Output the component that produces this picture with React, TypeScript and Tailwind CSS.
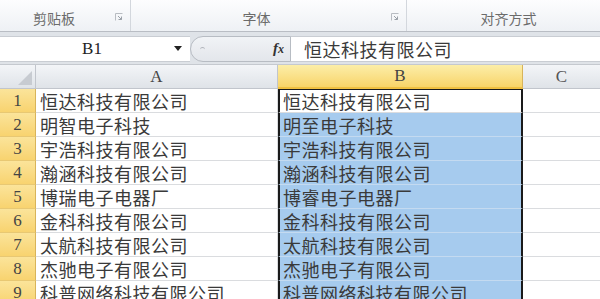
import React from "react";

const cjk = { fontFamily: '"Noto Sans CJK SC", "Noto Sans", sans-serif' };
const serif = { fontFamily: '"Liberation Serif", "Noto Sans CJK SC", serif' };

const colA = [
  "恒达科技有限公司",
  "明智电子科技",
  "宇浩科技有限公司",
  "瀚涵科技有限公司",
  "博瑞电子电器厂",
  "金科科技有限公司",
  "太航科技有限公司",
  "杰驰电子有限公司",
  "科普网络科技有限公司",
];

const colB = [
  "恒达科技有限公司",
  "明至电子科技",
  "宇浩科技有限公司",
  "瀚涵科技有限公司",
  "博睿电子电器厂",
  "金科科技有限公司",
  "太航科技有限公司",
  "杰驰电子有限公司",
  "科普网络科技有限公司",
];

function Launcher() {
  return (
    <svg width="8" height="8" viewBox="0 0 8 8" className="absolute right-[7px] top-[13px]">
      <path d="M0.5 7.5V0.5H7.5" fill="none" stroke="#b8bcc2" strokeWidth="1" />
      <path d="M3 3L6.5 6.5M6.5 3.5V6.5H3.5" fill="none" stroke="#9aa0a8" strokeWidth="1" />
    </svg>
  );
}

function Ribbon() {
  return (
    <div
      className="flex h-[32px] border-b border-[#b9bdc4] bg-gradient-to-b from-[#fdfdfe] to-[#eef1f5] text-[14px] leading-[20px] text-[#6b6b6b]"
      style={cjk}
    >
      <div className="relative flex w-[131px] items-end justify-center border-r border-[#d3d7dd] pb-[3px] pr-[22px]">
        剪贴板
        <Launcher />
      </div>
      <div className="relative flex w-[276px] items-end justify-center border-r border-[#d3d7dd] pb-[3px] pr-[24px]">
        字体
        <Launcher />
      </div>
      <div className="flex flex-1 items-end justify-center pb-[3px] pl-[10px]">对齐方式</div>
    </div>
  );
}

function FormulaBar() {
  return (
    <div className="flex h-[32px] items-center bg-[#dfe3e8] pb-[1px] pt-[2px]">
      <div className="flex h-[26px] w-[190px] items-center border-y border-[#c9cdd3] bg-white">
        <div className="flex-1 pl-[10px] text-center text-[17px] leading-[24px] text-[#222]" style={serif}>
          B1
        </div>
        <svg width="8" height="5" viewBox="0 0 8 5" className="mr-[8px]">
          <path d="M0 0H8L4 5Z" fill="#222" />
        </svg>
      </div>
      <div className="flex h-[26px] w-[101px] items-center justify-between rounded-l-[13px] border border-[#b7bcc3] bg-gradient-to-b from-[#f1f3f6] to-[#e3e6eb] pl-[9px] pr-[6px]">
        <div className="h-[3px] w-[5px] rounded-t-full border-t border-[#b0b4ba]" />
        <span className="text-[15px] font-bold italic leading-[20px] text-[#333]" style={serif}>
          f<span className="text-[12px]">x</span>
        </span>
      </div>
      <div
        className="flex h-[26px] flex-1 items-center border-y border-[#c9cdd3] bg-white pl-[13px] text-[18px] leading-[24px] tracking-[0.5px] text-[#3a3a3a]"
        style={cjk}
      >
        恒达科技有限公司
      </div>
    </div>
  );
}

export default function App() {
  return (
    <div className="h-[299px] w-[600px] overflow-hidden bg-white">
      <Ribbon />
      <FormulaBar />
      <div className="grid grid-cols-[36px_242px_245px_1fr] grid-rows-[24px] auto-rows-[24px] border-t border-[#c5c9cf]">
        {/* 헤더 */}
        <div className="relative border-b border-r border-[#c1c5cc] bg-gradient-to-b from-[#f3f5f8] to-[#dfe3e8]">
          <svg width="14" height="14" viewBox="0 0 14 14" className="absolute bottom-[3px] right-[3px]">
            <path d="M14 0V14H0Z" fill="#c7cbd1" />
          </svg>
        </div>
        <div
          className="flex items-center justify-center border-b border-r border-[#c1c5cc] bg-gradient-to-b from-[#f3f5f8] to-[#dfe3e8] text-[17px] leading-[22px] text-[#444]"
          style={serif}
        >
          A
        </div>
        <div
          className="flex items-center justify-center border-b-2 border-r border-b-[#f0c040] border-r-[#d8b45a] bg-gradient-to-b from-[#fceea8] to-[#f8d468] text-[17px] leading-[22px] text-[#444]"
          style={serif}
        >
          B
        </div>
        <div
          className="flex items-center justify-center border-b border-[#c1c5cc] bg-gradient-to-b from-[#f3f5f8] to-[#dfe3e8] text-[17px] leading-[22px] text-[#555]"
          style={serif}
        >
          C
        </div>

        {colA.map((a, i) => (
          <React.Fragment key={i}>
            <div
              className="flex items-center justify-center border-b border-r border-b-[#e8c873] border-r-[#d8b45a] bg-gradient-to-b from-[#fbe49a] to-[#f8d36f] text-[17px] leading-[22px] text-[#444]"
              style={serif}
            >
              {i + 1}
            </div>
            <div
              className="flex items-center overflow-hidden whitespace-nowrap border-b border-r border-[#dadcdf] pl-[4px] text-[18px] leading-[22px] tracking-[0.5px] text-[#3a3a3a]"
              style={cjk}
            >
              {a}
            </div>
            <div
              className={
                "flex items-center overflow-hidden whitespace-nowrap border-x-2 border-x-[#1a1a1a] pl-[3px] text-[18px] leading-[22px] tracking-[0.5px] text-[#3a3a3a] " +
                (i === 0
                  ? "border-b border-b-[#dadcdf] bg-white shadow-[inset_0_1px_0_#1a1a1a]"
                  : "border-b border-b-[#c4daf0] bg-[#a6cbee]")
              }
              style={cjk}
            >
              {colB[i]}
            </div>
            <div className="border-b border-[#dadcdf]" />
          </React.Fragment>
        ))}
      </div>
    </div>
  );
}
